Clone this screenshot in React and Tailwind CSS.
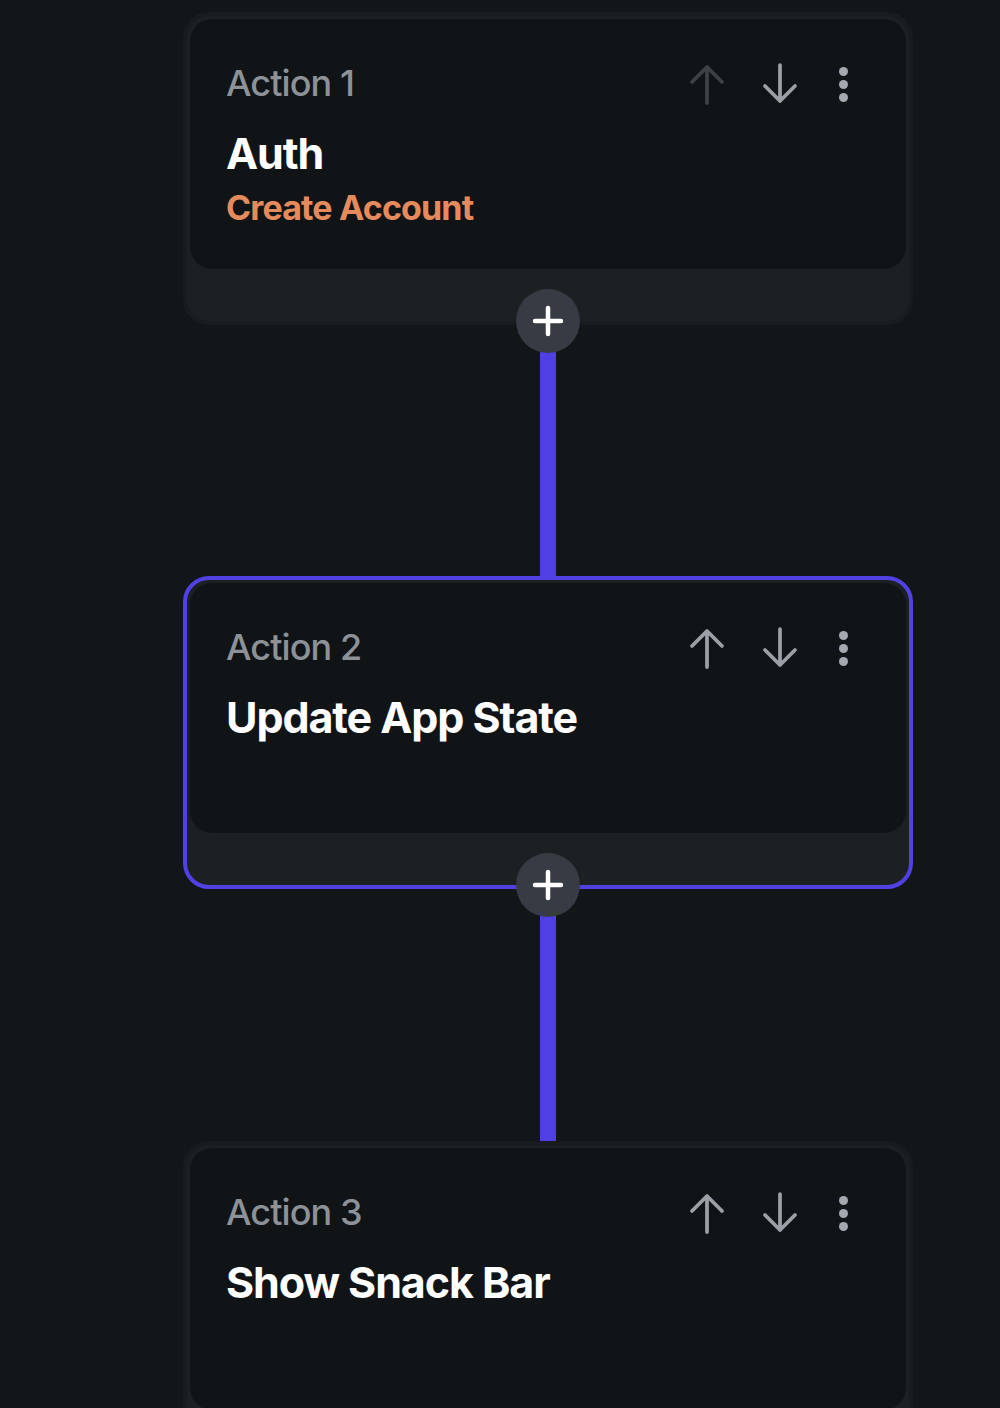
import React from "react";

const actions = [
  { label: "Action 1", title: "Auth", sub: "Create Account", upDisabled: true },
  { label: "Action 2", title: "Update App State", selected: true },
  { label: "Action 3", title: "Show Snack Bar", last: true },
];

function ArrowUp({ className }) {
  return (
    <svg width="40" height="42" viewBox="0 0 40 42" fill="none" className={className}>
      <path d="M20 40V4M5 19L20 4l15 15" stroke="currentColor" strokeWidth="3.75" strokeLinecap="round" strokeLinejoin="round" />
    </svg>
  );
}

function ArrowDown({ className }) {
  return (
    <svg width="40" height="42" viewBox="0 0 40 42" fill="none" className={className}>
      <path d="M20 2v36M5 23l15 15 15-15" stroke="currentColor" strokeWidth="3.75" strokeLinecap="round" strokeLinejoin="round" />
    </svg>
  );
}

function Dots() {
  return (
    <div className="flex flex-col items-center gap-[4px] w-[12px]">
      <span className="w-[9px] h-[9px] rounded-full bg-[#a3a9ae]" />
      <span className="w-[9px] h-[9px] rounded-full bg-[#a3a9ae]" />
      <span className="w-[9px] h-[9px] rounded-full bg-[#a3a9ae]" />
    </div>
  );
}

function PlusButton() {
  return (
    <div className="absolute left-1/2 bottom-0 -translate-x-1/2 translate-y-1/2 w-[64px] h-[64px] rounded-full bg-[#373b43] flex items-center justify-center z-10">
      <svg width="32" height="32" viewBox="0 0 32 32">
        <path d="M16 3v26M3 16h26" stroke="#ffffff" strokeWidth="4.5" strokeLinecap="round" />
      </svg>
    </div>
  );
}

function ActionCard({ action }) {
  return (
    <div
      className={`relative rounded-[26px] border-4 p-[3px] ${
        action.selected ? "border-[#5141e3] bg-[#1c2023]" : "border-[#181c1f] bg-[#1c2023]"
      } ${action.last ? "pb-0 rounded-b-none border-b-0" : ""}`}
    >
      <div className={`bg-[#111417] rounded-[22px] pl-[36px] pr-[57px] pt-[42px] ${action.last ? "h-[262px]" : "h-[250px]"}`}>
        <div className="flex items-start justify-between">
          <div className="text-[36px] leading-[44px] font-medium tracking-tight text-[#8c9297]">{action.label}</div>
          <div className="flex items-center pt-[2px]">
            <ArrowUp className={`mr-[33px] ${action.upDisabled ? "text-[#3b4145]" : "text-[#9aa0a5]"}`} />
            <ArrowDown className="mr-[37px] text-[#9aa0a5]" />
            <Dots />
          </div>
        </div>
        <div className="mt-[22px] text-[43px] leading-[52px] font-bold tracking-tight text-white">{action.title}</div>
        {action.sub && (
          <div className="mt-[9px] text-[34px] leading-[40px] font-bold tracking-tight text-[#e48a5d]">{action.sub}</div>
        )}
      </div>
      {!action.last && <div className="h-[49px]" />}
      {!action.last && <PlusButton />}
    </div>
  );
}

export default function App() {
  return (
    <div className="h-[1408px] overflow-hidden bg-[#131619] pl-[183px] pr-[87px] pt-[12px]" style={{ fontFamily: "Inter, 'Noto Sans', sans-serif" }}>
      <div className="flex flex-col">
        {actions.map((a, i) => (
          <React.Fragment key={a.label}>
            <ActionCard action={a} />
            {i < actions.length - 1 && (
              <div className={`${i === 0 ? "h-[251px]" : "h-[252px]"} flex justify-center`}>
                <div className="w-[16px] h-full bg-[#4f3fe4]" />
              </div>
            )}
          </React.Fragment>
        ))}
      </div>
    </div>
  );
}
